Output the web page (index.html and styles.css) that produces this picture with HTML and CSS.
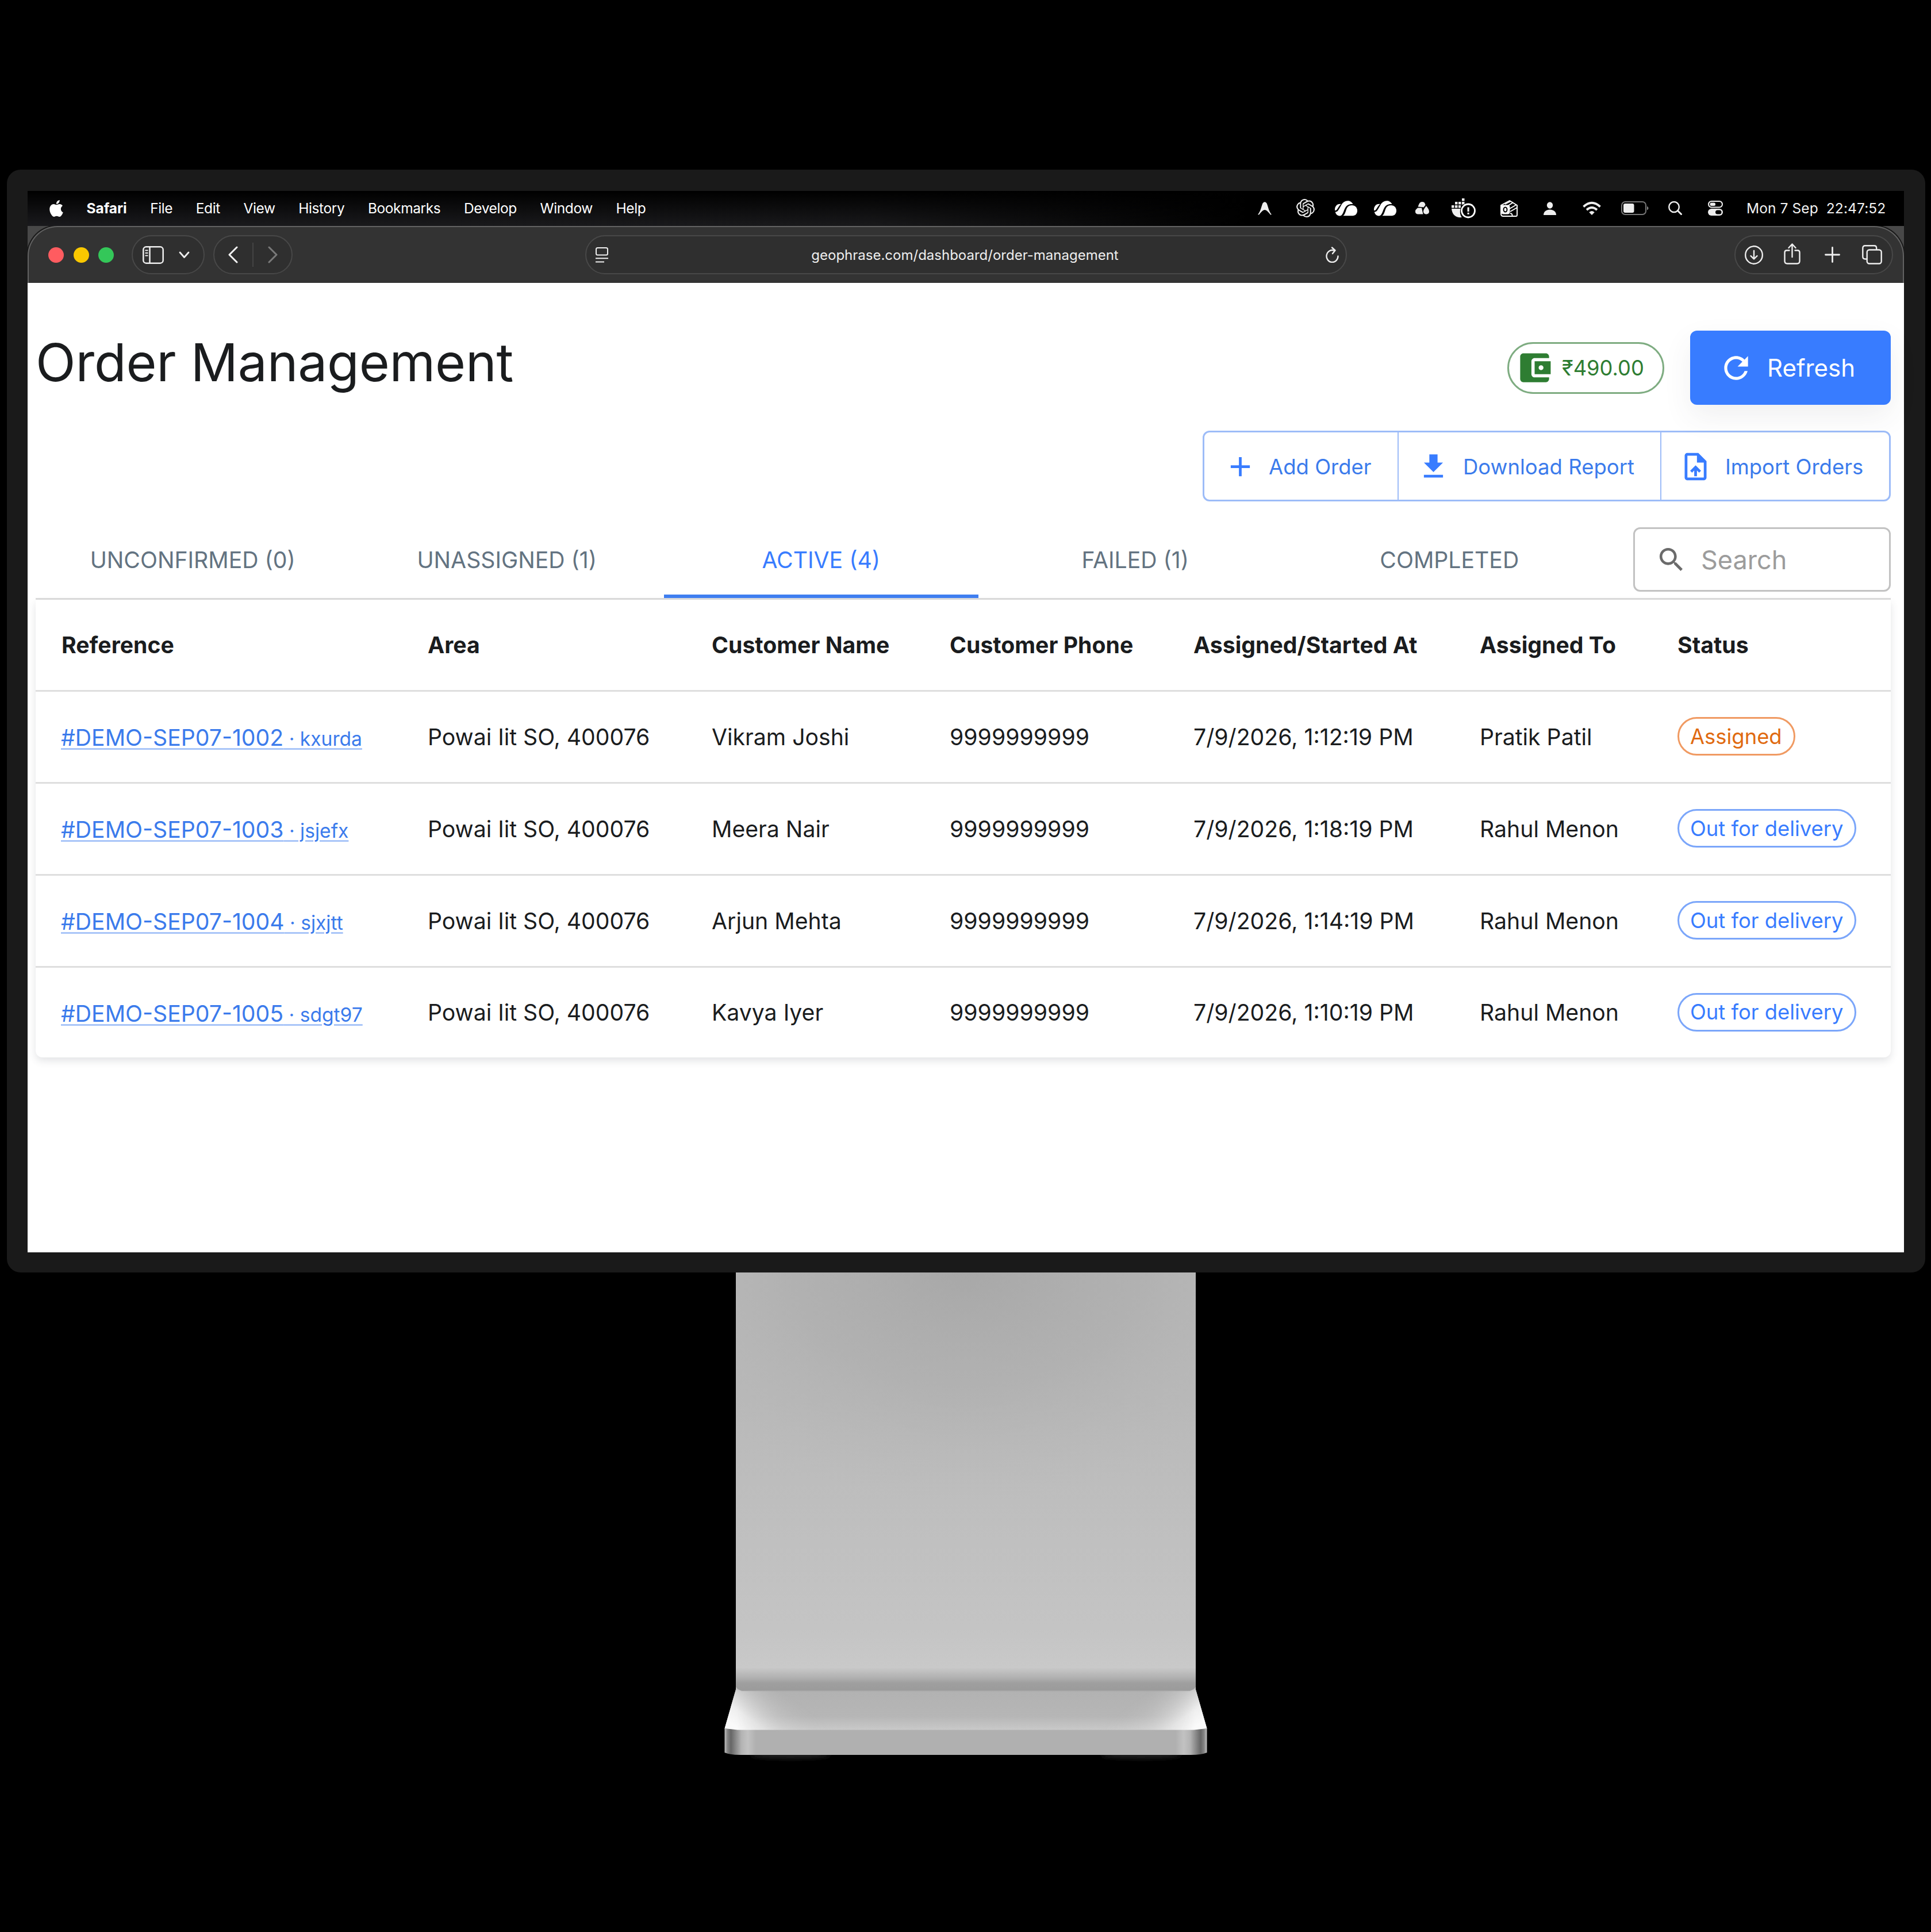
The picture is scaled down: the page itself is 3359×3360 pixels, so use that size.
FILE: index.html
```html
<!DOCTYPE html>
<html lang="en">

<head>
  <meta charset="utf-8">
  <title>Order Management</title>
  <link rel="stylesheet" href="styles.css">
</head>

<body>

  <div class="monitor">
    <div class="screen">

      <div class="menubar">
        <svg class="apple" viewBox="2 0 20 24" preserveAspectRatio="none"><path d="M12.152 6.896c-.948 0-2.415-1.078-3.96-1.04-2.04.027-3.91 1.183-4.961 3.014-2.117 3.675-.546 9.103 1.519 12.09 1.013 1.454 2.208 3.09 3.792 3.039 1.52-.065 2.09-.987 3.935-.987 1.831 0 2.35.987 3.96.948 1.637-.026 2.676-1.48 3.676-2.948 1.156-1.688 1.636-3.325 1.662-3.415-.039-.013-3.182-1.221-3.22-4.857-.026-3.04 2.48-4.494 2.597-4.559-1.429-2.09-3.623-2.324-4.39-2.376-2-.156-3.675 1.09-4.61 1.09zM15.53 3.83c.843-1.012 1.4-2.427 1.245-3.83-1.207.052-2.662.805-3.532 1.818-.78.896-1.454 2.338-1.273 3.714 1.338.104 2.715-.688 3.559-1.701"/></svg>
        <span class="app-name">Safari</span>
        <span>File</span>
        <span>Edit</span>
        <span>View</span>
        <span>History</span>
        <span>Bookmarks</span>
        <span>Develop</span>
        <span>Window</span>
        <span>Help</span>

        <div class="tray">
          <svg class="t-arrow" viewBox="0 0 24 23"><path d="M0 22C5 17 6 8 8.500 2.500Q12-2 15.500 2.500C18 8 19 17 24 22L22 22.500Q17 16 14 14.500Q12 13.500 10 14.500Q7 16 2 22.500Z"/></svg>
          <svg class="t-knot" viewBox="0 0 24 24"><path d="M22.2819 9.8211a5.9847 5.9847 0 0 0-.5157-4.9108 6.0462 6.0462 0 0 0-6.5098-2.9A6.0651 6.0651 0 0 0 4.9807 4.1818a5.9847 5.9847 0 0 0-3.9977 2.9 6.0462 6.0462 0 0 0 .7427 7.0966 5.98 5.98 0 0 0 .511 4.9107 6.051 6.051 0 0 0 6.5146 2.9001A5.9847 5.9847 0 0 0 13.2599 24a6.0557 6.0557 0 0 0 5.7718-4.2058 5.9894 5.9894 0 0 0 3.9977-2.9001 6.0557 6.0557 0 0 0-.7475-7.0729zm-9.022 12.6081a4.4755 4.4755 0 0 1-2.8764-1.0408l.1419-.0804 4.7783-2.7582a.7948.7948 0 0 0 .3927-.6813v-6.7369l2.02 1.1686a.071.071 0 0 1 .038.052v5.5826a4.504 4.504 0 0 1-4.4945 4.4944zm-9.6607-4.1254a4.4708 4.4708 0 0 1-.5346-3.0137l.142.0852 4.783 2.7582a.7712.7712 0 0 0 .7806 0l5.8428-3.3685v2.3324a.0804.0804 0 0 1-.0332.0615L9.74 19.9502a4.4992 4.4992 0 0 1-6.1408-1.6464zM2.3408 7.8956a4.485 4.485 0 0 1 2.3655-1.9728V11.6a.7664.7664 0 0 0 .3879.6765l5.8144 3.3543-2.0201 1.1685a.0757.0757 0 0 1-.071 0l-4.8303-2.7865A4.504 4.504 0 0 1 2.3408 7.872zm16.5963 3.8558L13.1038 8.364 15.1192 7.2a.0757.0757 0 0 1 .071 0l4.8303 2.7913a4.4944 4.4944 0 0 1-.6765 8.1042v-5.6772a.79.79 0 0 0-.407-.667zm2.0107-3.0231l-.142-.0852-4.7735-2.7818a.7759.7759 0 0 0-.7854 0L9.409 9.2297V6.8974a.0662.0662 0 0 1 .0284-.0615l4.8303-2.7866a4.4992 4.4992 0 0 1 6.6802 4.66zM8.3065 12.863l-2.02-1.1638a.0804.0804 0 0 1-.038-.0567V6.0742a4.4992 4.4992 0 0 1 7.3757-3.4537l-.142.0805L8.704 5.459a.7948.7948 0 0 0-.3927.6813zm1.0976-2.3654l2.602-1.4998 2.6069 1.4998v2.9994l-2.5974 1.4997-2.6067-1.4997Z"/></svg>
          <svg class="t-cloud" viewBox="0 0 39 27"><path d="M0 17C-.5 9 5 5 10.500 6C7 9 5.500 13 3.500 15.500Q2 17.500 0 17Z"/><path d="M.8 19.500C5.500 20 8 13 11 8C15-1 27-3 31.500 6C24 5.500 20.500 8 18 12.500C15 18 14 25 10 26.300C4 27 1.500 23 .8 19.500Z"/><path d="M14.500 26.300C19 23 19 14 23 10.300C26.500 7 33.500 7 36.800 11C41.500 17 38.500 26.300 31 26.300Z"/></svg>
          <svg class="t-cloud2" viewBox="0 0 39 27"><path d="M0 17C-.5 9 5 5 10.500 6C7 9 5.500 13 3.500 15.500Q2 17.500 0 17Z"/><path d="M.8 19.500C5.500 20 8 13 11 8C15-1 27-3 31.500 6C24 5.500 20.500 8 18 12.500C15 18 14 25 10 26.300C4 27 1.500 23 .8 19.500Z"/><path d="M14.500 26.300C19 23 19 14 23 10.300C26.500 7 33.500 7 36.800 11C41.500 17 38.500 26.300 31 26.300Z"/></svg>
          <svg class="t-tri" viewBox="0 0 24 22"><path d="M4.500 8.500C6 6 6.500 0 12 0C16 0 17 3 17.500 5.500L14.500 9.500Z"/><path d="M4 10.500H11L13.500 21.500H4C-1 21-1 15 1.500 13Z"/><path d="M19 7C21 10 24 13 24 17C24 23 14 23 14 17C14 13 17 10 19 7Z"/></svg>
          <svg class="t-dock" viewBox="0 0 42 35"><path d="M0 12h4.500v4.500H0zM6 12h4.500v4.500H6zM12 12h4v4.500h-4zM6 6h4.500v4.500H6zM12 6h4.500v4.500H12zM18 6h4.500v3.500L18 11zM18 0h4.500v4.500H18zM0 18h15.500C14 24 15 30 18 33C8 34 1 29 0 18Z"/><circle cx="29" cy="21.500" r="11.500" fill="none" stroke="#fff" stroke-width="2.800"/><path d="M27.500 15.500h3.200v7.500h-3.200zM27.500 24.800h3.200v3h-3.200z"/></svg>
          <svg class="t-box" viewBox="0 0 30 29" fill="none" stroke="#fff" stroke-width="1.900"><path d="M1 9L16 1L29 9V26Q29 28 27 28H5Q1 28 1 24Z" stroke-linejoin="round"/><path d="M8 7L18 2M13 10L22 4M16 15L28 8M17 20L29 13M20 28Q22 24 17 23"/><rect x="1.500" y="9.500" width="14" height="14" rx="3" fill="#fff"/><ellipse cx="8.500" cy="16.500" rx="3" ry="4" fill="#fff" stroke="#000" stroke-width="2"/></svg>
          <svg class="t-user" viewBox="0 0 22 23"><ellipse cx="11" cy="6" rx="5.200" ry="5.800"/><path d="M0 23C0 17 5 13.500 11 13.500S22 17 22 23Z"/></svg>
          <svg class="t-wifi" viewBox="0 0 32 24" fill="none" stroke="#eee" stroke-width="3.800"><path d="M1.500 9Q16-4.500 30.500 9"/><path d="M7 14.500Q16 6.500 25 14.500"/><path d="M16 23L11.800 18.700Q16 15.500 20.200 18.700Z" fill="#eee" stroke-width="1"/></svg>
          <svg class="t-battery" viewBox="0 0 48 24"><rect x="1" y="1" width="42" height="22" rx="6" fill="none" stroke="#777" stroke-width="2"/><rect x="4" y="4" width="18.500" height="16" rx="3"/><path d="M45 8.500Q47.500 10 47.500 12T45 15.500Z" fill="#888"/></svg>
          <svg class="t-search" viewBox="0 0 24 24" fill="none" stroke="#eee" stroke-width="2.400"><ellipse cx="10" cy="10" rx="8.800" ry="9"/><path d="M16.500 16.500L22.500 22.500" stroke-width="3" stroke-linecap="round"/></svg>
          <svg class="t-control" viewBox="0 0 26 26"><rect x="1" y="1" width="24" height="10.500" rx="5.250" fill="none" stroke="#eee" stroke-width="2"/><rect x="3.500" y="3.500" width="9.500" height="5.500" rx="2.500"/><rect x="0" y="14" width="26" height="12" rx="6"/><rect x="13" y="16.500" width="10.500" height="7" rx="3.500" fill="#000"/></svg>
        </div>
        <span class="clock">Mon 7 Sep&nbsp; 22:47:52</span>
      </div>

      <div class="toolbar-back">
        <div class="toolbar">
          <div class="lights">
            <i class="red"></i>
            <i class="yellow"></i>
            <i class="green"></i>
          </div>

          <div class="pill side-pill">
            <svg width="37" height="31" viewBox="0 0 37 31" fill="none" stroke="#eee" stroke-width="2.500"><rect x="1.300" y="1.300" width="34.400" height="28.400" rx="5"/><path d="M12.500 2v27"/><path d="M4.500 7.500h5M4.500 12h5M4.500 16.500h5" stroke-width="1.800"/></svg>
            <svg width="19" height="13" viewBox="0 0 19 13" fill="none" stroke="#eee" stroke-width="2.800" stroke-linecap="round" stroke-linejoin="round"><path d="M2 2l7.500 8.500L17 2"/></svg>
          </div>

          <div class="pill nav-pill">
            <svg width="17" height="30" viewBox="0 0 17 30" fill="none" stroke="#f2f2f2" stroke-width="3" stroke-linecap="round" stroke-linejoin="round"><path d="M15 2L2 15l13 13"/></svg>
            <i class="split"></i>
            <svg width="17" height="30" viewBox="0 0 17 30" fill="none" stroke="#7a7a7a" stroke-width="3" stroke-linecap="round" stroke-linejoin="round"><path d="M2 2l13 13L2 28"/></svg>
          </div>

          <div class="pill url-pill">
            <svg width="22" height="27" viewBox="0 0 22 27" fill="none" stroke="#eee" stroke-width="2"><rect x="1" y="1" width="20" height="12.500" rx="2.500"/><path d="M0 19.300h22M0 25.600h15"/></svg>
            <span class="url">geophrase.com/dashboard/order-management</span>
            <svg width="23" height="28" viewBox="0 0 23 28" fill="none" stroke="#eee" stroke-width="2.400" stroke-linecap="round" stroke-linejoin="round"><path d="M21.500 16.500A10 10.500 0 1 1 15 6.700"/><path d="M11 1.500L16.500 6.500L12 12"/></svg>
          </div>

          <div class="pill action-pill">
            <svg width="32" height="33" viewBox="0 0 32 33" fill="none" stroke="#eee" stroke-width="2.400" stroke-linecap="round" stroke-linejoin="round"><ellipse cx="16" cy="16.500" rx="14.800" ry="15.200"/><path d="M16 9v14M10.500 18l5.500 5.500 5.500-5.500"/></svg>
            <svg class="share" width="29" height="37" viewBox="0 0 29 37" fill="none" stroke="#eee" stroke-width="2.400" stroke-linecap="round" stroke-linejoin="round"><path d="M9.500 12.500H5q-3.500 0-3.500 3.500V31q0 4.500 4.500 4.500h17q4.500 0 4.500-4.500V16q0-3.500-3.500-3.500h-4.500"/><path d="M14.500 24V2M8.500 8l6-6.500 6 6.500"/></svg>
            <svg class="plus" width="27" height="28" viewBox="0 0 27 28" fill="none" stroke="#eee" stroke-width="2.800" stroke-linecap="round"><path d="M13.500 1.500v25M1.500 14h24"/></svg>
            <svg class="copies" width="35" height="34" viewBox="0 0 35 34" fill="none" stroke="#eee" stroke-width="2.400"><path d="M8.500 24.500H5.500q-4.200 0-4.200-4.200V5.500Q1.300 1.300 5.500 1.300H21q4.200 0 4.200 4.200V8.500"/><rect x="8.700" y="8.500" width="25" height="24" rx="4"/></svg>
          </div>
        </div>
      </div>

      <div class="page">
        <div class="page-header">
          <h1>Order Management</h1>
          <div class="wallet">
            <svg viewBox="0 0 24 24" fill="#2e7d32"><path d="M21 18v1c0 1.100-.9 2-2 2H5c-1.110 0-2-.9-2-2V5c0-1.100.890-2 2-2h14c1.100 0 2 .9 2 2v1h-9c-1.110 0-2 .9-2 2v8c0 1.100.890 2 2 2h9zm-9-2h10V8H12v8zm4-2.500c-.830 0-1.500-.670-1.500-1.500s.670-1.500 1.500-1.500 1.500.670 1.500 1.500-.670 1.500-1.500 1.500z"/></svg>
            <span>₹490.00</span>
          </div>
          <button class="refresh">
            <svg viewBox="0 0 24 24" fill="#fff"><path d="M17.650 6.350C16.200 4.900 14.210 4 12 4c-4.420 0-7.990 3.580-7.990 8s3.570 8 7.990 8c3.730 0 6.840-2.550 7.730-6h-2.080c-.820 2.330-3.040 4-5.650 4-3.310 0-6-2.690-6-6s2.690-6 6-6c1.660 0 3.140.690 4.220 1.780L13 11h7V4l-2.350 2.350z"/></svg>
            <span>Refresh</span>
          </button>
        </div>

        <div class="button-group">
          <button class="btn add">
            <svg viewBox="0 0 24 24"><path d="M19 13h-6v6h-2v-6H5v-2h6V5h2v6h6v2z"/></svg>
            <span>Add Order</span>
          </button>
          <button class="btn download">
            <svg viewBox="0 0 24 24"><path d="M5 20h14v-2H5v2zM19 9h-4V3H9v6H5l7 7 7-7z"/></svg>
            <span>Download Report</span>
          </button>
          <button class="btn import">
            <svg viewBox="0 0 24 24"><path d="M14 2H6c-1.100 0-1.990.9-1.990 2L4 20c0 1.100.890 2 1.990 2H18c1.100 0 2-.9 2-2V8l-6-6zm4 18H6V4h7v5h5v11zM8 15.010l1.410 1.410L11 14.840V19h2v-4.160l1.590 1.590L16 15.010 12.010 11 8 15.010z"/></svg>
            <span>Import Orders</span>
          </button>
        </div>

        <div class="tab-row">
          <div class="tab">UNCONFIRMED (0)</div>
          <div class="tab">UNASSIGNED (1)</div>
          <div class="tab active">ACTIVE (4)</div>
          <div class="tab">FAILED (1)</div>
          <div class="tab">COMPLETED</div>
          <div class="search">
            <svg viewBox="0 0 24 24" fill="#6b6b6b"><path d="M15.500 14h-.790l-.280-.270C15.410 12.590 16 11.110 16 9.500 16 5.910 13.090 3 9.500 3S3 5.910 3 9.500 5.910 16 9.500 16c1.610 0 3.090-.590 4.230-1.570l.270.280v.790l5 4.990L20.490 19l-4.990-5zm-6 0C7.010 14 5 11.990 5 9.500S7.010 5 9.500 5 14 7.010 14 9.500 11.990 14 9.500 14z"/></svg>
            <span>Search</span>
          </div>
        </div>

        <table class="orders">
          <colgroup>
            <col class="c-ref">
            <col class="c-area">
            <col class="c-name">
            <col class="c-phone">
            <col class="c-start">
            <col class="c-to">
            <col>
          </colgroup>
          <thead>
            <tr>
              <th>Reference</th>
              <th>Area</th>
              <th>Customer Name</th>
              <th>Customer Phone</th>
              <th>Assigned/Started At</th>
              <th>Assigned To</th>
              <th>Status</th>
            </tr>
          </thead>
          <tbody>
            <tr>
              <td class="ref"><a>#DEMO-SEP07-1002<small> · kxurda</small></a></td>
              <td>Powai Iit SO, 400076</td>
              <td>Vikram Joshi</td>
              <td>9999999999</td>
              <td>7/9/2026, 1:12:19 PM</td>
              <td>Pratik Patil</td>
              <td><span class="chip assigned">Assigned</span></td>
            </tr>
            <tr>
              <td class="ref"><a>#DEMO-SEP07-1003<small> · jsjefx</small></a></td>
              <td>Powai Iit SO, 400076</td>
              <td>Meera Nair</td>
              <td>9999999999</td>
              <td>7/9/2026, 1:18:19 PM</td>
              <td>Rahul Menon</td>
              <td><span class="chip">Out for delivery</span></td>
            </tr>
            <tr>
              <td class="ref"><a>#DEMO-SEP07-1004<small> · sjxjtt</small></a></td>
              <td>Powai Iit SO, 400076</td>
              <td>Arjun Mehta</td>
              <td>9999999999</td>
              <td>7/9/2026, 1:14:19 PM</td>
              <td>Rahul Menon</td>
              <td><span class="chip">Out for delivery</span></td>
            </tr>
            <tr>
              <td class="ref"><a>#DEMO-SEP07-1005<small> · sdgt97</small></a></td>
              <td>Powai Iit SO, 400076</td>
              <td>Kavya Iyer</td>
              <td>9999999999</td>
              <td>7/9/2026, 1:10:19 PM</td>
              <td>Rahul Menon</td>
              <td><span class="chip">Out for delivery</span></td>
            </tr>
          </tbody>
        </table>
      </div>

    </div>
  </div>

  <svg class="stand" width="860" height="860" viewBox="1250 2213 860 860">
    <defs>
      <linearGradient id="neck" x1="0" y1="0" x2="0" y2="1">
        <stop offset="0" stop-color="#b9b9b9"/>
        <stop offset=".3" stop-color="#b9b9b9"/>
        <stop offset=".5" stop-color="#bdbdbd"/>
        <stop offset=".85" stop-color="#c4c4c4"/>
        <stop offset=".945" stop-color="#c9c9c9"/>
        <stop offset=".97" stop-color="#b0b0b0"/>
        <stop offset=".982" stop-color="#9f9f9f"/>
        <stop offset="1" stop-color="#9b9b9b"/>
      </linearGradient>
      <radialGradient id="shade" cx=".5" cy="0" r=".95" gradientTransform="translate(.1 0) scale(.8 1)">
        <stop offset="0" stop-color="#a8a8a8"/>
        <stop offset=".5" stop-color="#aeaeae" stop-opacity=".7"/>
        <stop offset="1" stop-color="#b8b8b8" stop-opacity="0"/>
      </radialGradient>
      <linearGradient id="shelf" x1="0" y1="0" x2="0" y2="1">
        <stop offset="0" stop-color="#9b9b9b"/>
        <stop offset=".14" stop-color="#9f9f9f"/>
        <stop offset=".2" stop-color="#b2b2b2"/>
        <stop offset=".7" stop-color="#b6b6b6"/>
        <stop offset="1" stop-color="#cacaca"/>
      </linearGradient>
      <linearGradient id="shine-left" gradientUnits="userSpaceOnUse" x1="1262" y1="2990" x2="1319" y2="2910">
        <stop offset="0" stop-color="#fafafa"/>
        <stop offset=".25" stop-color="#eee"/>
        <stop offset="1" stop-color="#ccc" stop-opacity="0"/>
      </linearGradient>
      <linearGradient id="shine-right" gradientUnits="userSpaceOnUse" x1="2098" y1="2990" x2="2041" y2="2910">
        <stop offset="0" stop-color="#fafafa"/>
        <stop offset=".25" stop-color="#eee"/>
        <stop offset="1" stop-color="#ccc" stop-opacity="0"/>
      </linearGradient>
      <linearGradient id="fade-left" x1="0" y1="0" x2="1" y2="0">
        <stop offset=".15" stop-color="#fff"/>
        <stop offset=".5" stop-color="#777"/>
        <stop offset="1" stop-color="#000"/>
      </linearGradient>
      <linearGradient id="fade-right" x1="1" y1="0" x2="0" y2="0">
        <stop offset=".15" stop-color="#fff"/>
        <stop offset=".5" stop-color="#777"/>
        <stop offset="1" stop-color="#000"/>
      </linearGradient>
      <mask id="mask-left"><rect x="1250" y="2920" width="210" height="100" fill="url(#fade-left)"/></mask>
      <mask id="mask-right"><rect x="1900" y="2920" width="210" height="100" fill="url(#fade-right)"/></mask>
      <linearGradient id="front" x1="0" y1="0" x2="1" y2="0">
        <stop offset="0" stop-color="#c0c0c0"/>
        <stop offset=".006" stop-color="#858585"/>
        <stop offset=".013" stop-color="#666"/>
        <stop offset=".035" stop-color="#b4b4b4"/>
        <stop offset=".048" stop-color="#c2c2c2"/>
        <stop offset=".065" stop-color="#b0b0b0"/>
        <stop offset=".935" stop-color="#b0b0b0"/>
        <stop offset=".952" stop-color="#c2c2c2"/>
        <stop offset=".965" stop-color="#b4b4b4"/>
        <stop offset=".987" stop-color="#666"/>
        <stop offset=".994" stop-color="#858585"/>
        <stop offset="1" stop-color="#c0c0c0"/>
      </linearGradient>
      <filter id="soft" x="-20%" y="-100%" width="140%" height="300%"><feGaussianBlur stdDeviation="4"/></filter>
    </defs>
    <ellipse cx="1375" cy="3052" rx="70" ry="6" fill="#222" filter="url(#soft)"/>
    <ellipse cx="1985" cy="3052" rx="70" ry="6" fill="#222" filter="url(#soft)"/>
    <path d="M1280 2926H2080V2938L2099.500 3006L2080 3010H1280L1260.500 3006L1280 2938Z" fill="url(#shelf)"/>
    <path d="M1280 2934L1290 2941H1460V3010H1280L1260.500 3006L1280 2938Z" fill="url(#shine-left)" mask="url(#mask-left)"/>
    <path d="M2080 2934L2070 2941H1900V3010H2080L2099.500 3006L2080 2938Z" fill="url(#shine-right)" mask="url(#mask-right)"/>
    <path d="M1280 2213H2080V2932Q2078 2940 2068 2940H1292Q1282 2940 1280 2932Z" fill="url(#neck)"/>
    <path d="M1280 2213H2080V2630H1280Z" fill="url(#shade)"/>
    <path d="M1260.500 3006L1283 3008.500H2077L2099.500 3006V3048Q2090 3052 2072 3052H1288Q1270 3052 1260.500 3048Z" fill="url(#front)"/>
  </svg>

</body>

</html>
```
FILE: styles.css
```css
body {
  margin: 0;
  height: 3065px;
  padding: 295px 10px 0 12px;
  background-color: #000;
  font-family: Inter, "Liberation Sans", sans-serif;
  overflow: hidden;
}

svg {
  display: block;
  flex: none;
}

.monitor {
  height: 1846px;
  padding: 37px 37px 35px 36px;
  border-radius: 24px;
  background-color: #1a1a1a;
}

.screen {
  height: 1846px;
  display: flex;
  flex-direction: column;
  background-color: #fff;
}

/* system menu bar */

.menubar {
  height: 61px;
  box-sizing: border-box;
  flex: none;
  display: flex;
  align-items: center;
  gap: 40.600px;
  padding: 0 29px 1px 38px;
  background: linear-gradient(#000, rgba(0, 0, 0, 0)), linear-gradient(90deg, #1a1a1d 0%, #19191b 45%, #000 65%);
  color: #fff;
  font-size: 24.5px;
  letter-spacing: -0.4px;
  white-space: nowrap;
}

.apple {
  width: 24px;
  height: 29px;
  fill: #fff;
}

.app-name {
  font-weight: 700;
  letter-spacing: -0.1px;
}

.tray {
  margin-left: auto;
  display: flex;
  align-items: center;
  fill: #eee;
}

.t-arrow { width: 24px; height: 23px; }
.t-knot { width: 32px; height: 32px; margin-left: 43px; }
.t-cloud { width: 39px; height: 27px; margin-left: 35px; fill: #fff; }
.t-cloud2 { width: 39px; height: 27px; margin-left: 29px; fill: #fff; }
.t-tri { width: 24px; height: 22px; margin-left: 33px; }
.t-dock { width: 42px; height: 35px; margin-left: 39px; }
.t-box { width: 30px; height: 29px; margin-left: 43px; }
.t-user { width: 22px; height: 23px; margin-left: 45px; }
.t-wifi { width: 32px; height: 25px; margin-left: 46px; }
.t-battery { width: 48px; height: 24px; margin-left: 35px; }
.t-search { width: 24px; height: 24px; margin-left: 34px; }
.t-control { width: 26px; height: 26px; margin-left: 45px; }

.clock {
  width: 245px;
  color: #f2f2f2;
  letter-spacing: 0.1px;
}

/* browser toolbar */

.toolbar-back {
  height: 99px;
  flex: none;
  background-color: #484848;
}

.toolbar {
  height: 99px;
  box-sizing: border-box;
  display: flex;
  align-items: center;
  padding: 0 17px 1px 34px;
  border: 2px solid #626262;
  border-bottom: none;
  border-radius: 52px 52px 0 0;
  background-color: #333;
  box-shadow: 0 0 0 2px #1a1a1a;
  clip-path: inset(0);
}

.lights {
  display: flex;
  gap: 16.5px;
}

.lights i {
  width: 27px;
  height: 27px;
  border-radius: 50%;
}

.red { background-color: #ff5c60; }
.yellow { background-color: #fac800; }
.green { background-color: #34c759; }

.pill {
  height: 68px;
  box-sizing: border-box;
  display: flex;
  align-items: center;
  border: 2px solid #484848;
  border-radius: 34px;
  background-color: #2f2f2f;
}

.side-pill {
  width: 127px;
  margin-left: 31px;
  padding-left: 17px;
  gap: 26px;
}

.nav-pill {
  width: 138px;
  margin-left: 15px;
  padding-left: 24px;
}

.split {
  width: 2px;
  height: 42px;
  margin: 0 25px;
  background-color: #444;
}

.url-pill {
  width: 1325px;
  margin-left: 509px;
  padding: 0 12px 0 16px;
  justify-content: space-between;
}

.url {
  margin-right: 7px;
  color: #eee;
  font-size: 24px;
}

.action-pill {
  width: 276px;
  margin-left: auto;
  padding-left: 16px;
}

.share { margin: 0 0 4px 36px; }
.plus { margin-left: 42px; }
.copies { margin-left: 38px; }

/* order page */

.page {
  padding: 83px 23px 0 14px;
  color: #1a1c1e;
}

.page-header {
  display: flex;
  align-items: center;
}

h1 {
  margin: 0 auto 20px 0;
  font-size: 91px;
  font-weight: 400;
  line-height: 108px;
  letter-spacing: -0.2px;
}

.wallet {
  width: 273px;
  height: 90px;
  box-sizing: border-box;
  display: flex;
  align-items: center;
  padding-left: 11px;
  border: 3px solid #7eac81;
  border-radius: 45px;
  color: #2e7d32;
  font-size: 36.3px;
}

.wallet svg {
  width: 67px;
  height: 67px;
  margin-right: 14px;
}

button {
  border: none;
  background: none;
  padding: 0;
  font-family: inherit;
  display: flex;
  align-items: center;
}

.refresh {
  width: 349px;
  height: 129px;
  margin-left: 45px;
  padding-left: 49px;
  border-radius: 12px;
  background-color: #387cff;
  box-shadow: 0 20px 50px rgba(60, 64, 80, .08);
  color: #fff;
  font-size: 42px;
}

.refresh svg {
  width: 62px;
  height: 62px;
  margin-right: 23px;
}

.button-group {
  width: 1197px;
  height: 123px;
  box-sizing: border-box;
  display: flex;
  margin: 45px 0 0 auto;
  border: 3px solid #9dbcf8;
  border-radius: 12px;
}

.btn {
  color: #3b7bec;
  fill: #387cff;
  font-size: 36.5px;
  padding: 2px 0 0 34px;
}

.btn svg {
  width: 57px;
  height: 57px;
  margin-right: 21px;
}

.btn + .btn {
  border-left: 2px solid #9dbcf8;
}

.add { width: 336px; }
.download { width: 457px; padding-left: 32px; }
.import { width: 398px; padding-left: 31px; }

.download svg { margin-right: 23px; }
.import svg { margin-right: 23px; }

.tab-row {
  height: 138px;
  box-sizing: border-box;
  display: flex;
  align-items: center;
  margin-top: 33px;
  border-bottom: 3px solid #dcdcdc;
}

.tab {
  width: 546.5px;
  height: 135px;
  box-sizing: border-box;
  text-align: center;
  color: #637381;
  font-size: 39.2px;
  line-height: 137px;
}

.tab.active {
  color: #387cff;
  border-bottom: 6px solid #3f7ef0;
}

.search {
  width: 448px;
  height: 112px;
  box-sizing: border-box;
  display: flex;
  align-items: center;
  margin-left: auto;
  padding: 2px 0 0 36px;
  border: 3px solid #c2c2c2;
  border-radius: 12px;
  color: #9c9c9c;
  font-size: 45px;
}

.search svg {
  width: 55px;
  height: 55px;
  margin-right: 24px;
}

.orders {
  width: 100%;
  table-layout: fixed;
  border-spacing: 0;
  border-radius: 0 0 12px 12px;
  box-shadow: 0 6px 14px rgba(60, 64, 80, .14);
  font-size: 39.2px;
}

.c-ref { width: 637px; }
.c-area { width: 494px; }
.c-name { width: 414px; }
.c-phone { width: 424px; }
.c-start { width: 498px; }
.c-to { width: 344px; }

th,
td {
  height: 157px;
  padding: 0 0 0 45px;
  border-bottom: 3px solid #dedede;
  text-align: left;
  white-space: nowrap;
  line-height: 60px;
}

th {
  font-weight: 700;
}

tr:last-child td {
  height: 156px;
  border-bottom: none;
}

thead tr:last-child th {
  border-bottom: 3px solid #dedede;
}

td.ref {
  height: 152px;
  padding: 5px 0 0 44px;
}

tr:last-child td.ref {
  height: 151px;
}

td a {
  color: #3b7bec;
  text-decoration: underline;
  text-decoration-color: #a9c5f8;
  text-decoration-thickness: 3px;
  text-underline-offset: 4px;
}

td small {
  font-size: 33.6px;
}

.chip {
  height: 67px;
  box-sizing: border-box;
  display: inline-flex;
  align-items: center;
  padding: 0 20px 0 19px;
  vertical-align: middle;
  margin-top: -2px;
  border: 3px solid #7ba6fa;
  border-radius: 34px;
  color: #387cff;
  font-size: 36.4px;
}

.chip.assigned {
  border-color: #f09a62;
  color: #e06a10;
}

/* stand under the monitor */

.stand {
  margin-left: 1238px;
}
```
